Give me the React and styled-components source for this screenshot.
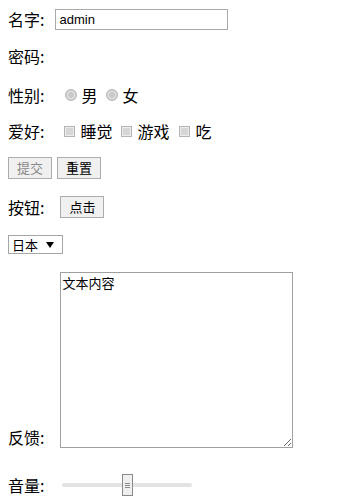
import styled, { createGlobalStyle } from "styled-components";

const GlobalStyle = createGlobalStyle`
  body {
    margin: 8px;
    background: #fff;
    color: #000;
    font-family: "Noto Sans CJK SC", "Liberation Sans", sans-serif;
  }
`;

const Form = styled.form`
  display: flex;
  flex-direction: column;
`;

const Row = styled.div`
  display: flex;
  align-items: ${(p) => (p.$bottom ? "flex-end" : "center")};
  min-height: 22px;
  margin-top: ${(p) => p.$top || 0}px;
`;

const Label = styled.span`
  font-size: 16px;
  line-height: 22px;
  margin-right: ${(p) => p.$space || 0}px;
  white-space: nowrap;
`;

const TextInput = styled.input`
  box-sizing: border-box;
  width: 173px;
  height: 21px;
  margin: 1px 0 0;
  padding: 1px 3px;
  border: 1px solid #a9a9a9;
  font-family: "Liberation Sans", Arial, sans-serif;
  font-size: 13px;
  color: #000;
  outline: none;
`;

const Choice = styled.label`
  display: flex;
  align-items: center;
  font-size: 16px;
  line-height: 22px;
  margin-right: ${(p) => p.$space || 0}px;
`;

const Radio = styled.input.attrs({ type: "radio" })`
  appearance: none;
  box-sizing: border-box;
  width: 12px;
  height: 12px;
  margin: 0 4px 0 0;
  border-radius: 50%;
  border: 1px solid #b9b9b9;
  background: radial-gradient(circle, #c9c9c9 0 35%, #dcdcdc 45% 60%, #c4c4c4 70%);
`;

const Check = styled.input.attrs({ type: "checkbox" })`
  appearance: none;
  box-sizing: border-box;
  width: 11px;
  height: 11px;
  margin: 0 5px 0 0;
  border: 1px solid #b4b4b4;
  background: #d6d6d6;
  box-shadow: inset 0 0 0 1px #ececec;
`;

const Button = styled.button`
  box-sizing: border-box;
  height: 22px;
  padding: 0 8px;
  margin-right: ${(p) => p.$space || 0}px;
  border: 1px solid #adadad;
  background: #f0f0f0;
  font-family: "Noto Sans CJK SC", sans-serif;
  font-size: 13px;
  line-height: 20px;
  color: #000;

  &:disabled {
    color: #8a8a8a;
  }
`;

const SelectBox = styled.div`
  box-sizing: border-box;
  display: flex;
  align-items: center;
  width: 55px;
  height: 19px;
  border: 1px solid #a6a6a6;
  background: #fff;
`;

const Select = styled.select`
  appearance: none;
  flex: 1;
  min-width: 0;
  height: 100%;
  margin: 0;
  padding: 0 0 0 3px;
  border: none;
  border-radius: 0;
  background: transparent;
  font-family: "Noto Sans CJK SC", sans-serif;
  font-size: 13px;
  line-height: 17px;
  color: #000;
  outline: none;
`;

const Arrow = styled.span`
  flex: none;
  width: 0;
  height: 0;
  margin: 1px 8px 0 0;
  border-left: 4px solid transparent;
  border-right: 4px solid transparent;
  border-top: 6px solid #000;
`;

const TextArea = styled.textarea`
  box-sizing: border-box;
  width: 233px;
  height: 176px;
  margin: 0;
  padding: 2px 1px;
  border: 1px solid #a0a0a0;
  font-family: "Noto Sans CJK SC", sans-serif;
  font-size: 13px;
  line-height: 16px;
  color: #000;
  outline: none;
`;

const Range = styled.input.attrs({ type: "range" })`
  appearance: none;
  width: 130px;
  height: 22px;
  margin: 0;
  background: transparent;

  &::-webkit-slider-runnable-track {
    height: 4px;
    border-radius: 2px;
    background: #e3e3e3;
  }

  &::-webkit-slider-thumb {
    appearance: none;
    box-sizing: border-box;
    width: 11px;
    height: 22px;
    margin-top: -9px;
    border: 1px solid #8a8a8a;
    background:
      linear-gradient(#8a8a8a, #8a8a8a) center 8px / 5px 1px no-repeat,
      linear-gradient(#8a8a8a, #8a8a8a) center 10px / 5px 1px no-repeat,
      linear-gradient(#8a8a8a, #8a8a8a) center 12px / 5px 1px no-repeat,
      #efefef;
  }
`;

export default function App() {
  return (
    <>
      <GlobalStyle />
      <Form onSubmit={(e) => e.preventDefault()}>
        <Row>
          <Label $space={11}>名字:</Label>
          <TextInput defaultValue="admin" />
        </Row>
        <Row $top={15}>
          <Label>密码:</Label>
        </Row>
        <Row $top={17}>
          <Label $space={21}>性别:</Label>
          <Choice $space={9}>
            <Radio name="sex" />男
          </Choice>
          <Choice>
            <Radio name="sex" />女
          </Choice>
        </Row>
        <Row $top={14}>
          <Label $space={20}>爱好:</Label>
          <Choice $space={9}>
            <Check />睡觉
          </Choice>
          <Choice $space={10}>
            <Check />游戏
          </Choice>
          <Choice>
            <Check />吃
          </Choice>
        </Row>
        <Row $top={15}>
          <Button type="submit" disabled $space={5}>
            提交
          </Button>
          <Button type="reset">重置</Button>
        </Row>
        <Row $top={17}>
          <Label $space={16}>按钮:</Label>
          <Button type="button">点击</Button>
        </Row>
        <Row $top={15}>
          <SelectBox>
            <Select defaultValue="jp">
              <option value="jp">日本</option>
              <option value="cn">中国</option>
            </Select>
            <Arrow />
          </SelectBox>
        </Row>
        <Row $top={17} $bottom>
          <Label $space={16}>反馈:</Label>
          <TextArea defaultValue="文本内容" />
        </Row>
        <Row $top={26}>
          <Label $space={18}>音量:</Label>
          <Range defaultValue={50} />
        </Row>
      </Form>
    </>
  );
}
